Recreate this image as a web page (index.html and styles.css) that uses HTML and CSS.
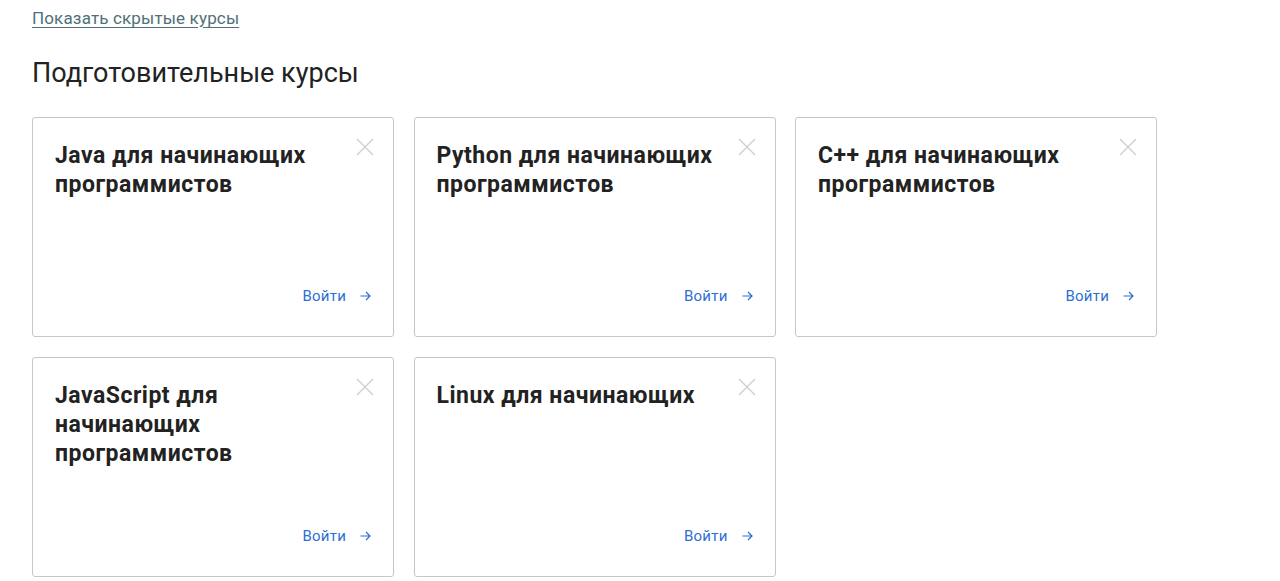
FILE: index.html
```html
<!DOCTYPE html>
<html lang="ru">

<head>
    <meta charset="UTF-8">
    <meta name="viewport" content="width=device-width, initial-scale=1.0">
    <title>Подготовительные курсы</title>
    <link rel="stylesheet" href="styles.css">
</head>

<body>
    <div class="page">
        <a class="show-hidden" href="#">Показать скрытые курсы</a>
        <h2 class="section-title">Подготовительные курсы</h2>

        <div class="course-grid">
            <div class="course-card">
                <div class="card-head">
                    <h3>Java для начинающих программистов</h3>
                    <button class="hide-btn" title="Скрыть">
                        <svg width="18" height="18" viewBox="0 0 18 18"><path d="M1 1L17 17M17 1L1 17" stroke="#cfcfcf" stroke-width="1.4" fill="none"/></svg>
                    </button>
                </div>
                <a class="enter" href="#">Войти <span class="arrow">
                    <svg width="11" height="10" viewBox="0 0 11 10"><path d="M0.5 5H10M6 1L10 5L6 9" stroke="#2d6fd2" stroke-width="1.2" fill="none"/></svg>
                </span></a>
            </div>
            <div class="course-card">
                <div class="card-head">
                    <h3>Python для начинающих программистов</h3>
                    <button class="hide-btn" title="Скрыть">
                        <svg width="18" height="18" viewBox="0 0 18 18"><path d="M1 1L17 17M17 1L1 17" stroke="#cfcfcf" stroke-width="1.4" fill="none"/></svg>
                    </button>
                </div>
                <a class="enter" href="#">Войти <span class="arrow">
                    <svg width="11" height="10" viewBox="0 0 11 10"><path d="M0.5 5H10M6 1L10 5L6 9" stroke="#2d6fd2" stroke-width="1.2" fill="none"/></svg>
                </span></a>
            </div>
            <div class="course-card">
                <div class="card-head">
                    <h3>C++ для начинающих программистов</h3>
                    <button class="hide-btn" title="Скрыть">
                        <svg width="18" height="18" viewBox="0 0 18 18"><path d="M1 1L17 17M17 1L1 17" stroke="#cfcfcf" stroke-width="1.4" fill="none"/></svg>
                    </button>
                </div>
                <a class="enter" href="#">Войти <span class="arrow">
                    <svg width="11" height="10" viewBox="0 0 11 10"><path d="M0.5 5H10M6 1L10 5L6 9" stroke="#2d6fd2" stroke-width="1.2" fill="none"/></svg>
                </span></a>
            </div>
            <div class="course-card">
                <div class="card-head">
                    <h3>JavaScript для начинающих программистов</h3>
                    <button class="hide-btn" title="Скрыть">
                        <svg width="18" height="18" viewBox="0 0 18 18"><path d="M1 1L17 17M17 1L1 17" stroke="#cfcfcf" stroke-width="1.4" fill="none"/></svg>
                    </button>
                </div>
                <a class="enter" href="#">Войти <span class="arrow">
                    <svg width="11" height="10" viewBox="0 0 11 10"><path d="M0.5 5H10M6 1L10 5L6 9" stroke="#2d6fd2" stroke-width="1.2" fill="none"/></svg>
                </span></a>
            </div>
            <div class="course-card">
                <div class="card-head">
                    <h3>Linux для начинающих</h3>
                    <button class="hide-btn" title="Скрыть">
                        <svg width="18" height="18" viewBox="0 0 18 18"><path d="M1 1L17 17M17 1L1 17" stroke="#cfcfcf" stroke-width="1.4" fill="none"/></svg>
                    </button>
                </div>
                <a class="enter" href="#">Войти <span class="arrow">
                    <svg width="11" height="10" viewBox="0 0 11 10"><path d="M0.5 5H10M6 1L10 5L6 9" stroke="#2d6fd2" stroke-width="1.2" fill="none"/></svg>
                </span></a>
            </div>
        </div>
    </div>
</body>

</html>
```

FILE: styles.css
```css
body {
    font-family: Roboto, 'Liberation Sans', sans-serif;
    background-color: #fff;
    color: #222;
    margin: 0;
}

.page {
    padding: 8px 32px 0;
}

.show-hidden {
    display: inline-block;
    font-size: 17px;
    letter-spacing: 0.15px;
    line-height: 20px;
    color: #50707a;
    text-decoration: underline;
    text-underline-offset: 3px;
}

.section-title {
    font-size: 27px;
    font-weight: 400;
    line-height: 32px;
    margin: 29px 0 28px;
    color: #222;
}

.course-grid {
    display: grid;
    grid-template-columns: repeat(3, 362px);
    grid-auto-rows: 220px;
    gap: 20px 19.5px;
}

.course-card {
    border: 1px solid #c6c6c6;
    border-radius: 3px;
    display: flex;
    flex-direction: column;
    justify-content: space-between;
    padding: 20px 22px 30px 22px;
    box-sizing: border-box;
}

.card-head {
    display: flex;
    justify-content: space-between;
    align-items: flex-start;
}

.card-head h3 {
    font-size: 23px;
    font-weight: 700;
    letter-spacing: 0.5px;
    line-height: 29px;
    margin: 0;
    padding-top: 3px;
    max-width: 280px;
    color: #222;
}

.hide-btn {
    background: none;
    border: none;
    padding: 0;
    margin: 0 -3px 0 0;
    cursor: pointer;
    line-height: 0;
}

.enter {
    align-self: flex-end;
    display: flex;
    align-items: center;
    gap: 14px;
    font-size: 15px;
    letter-spacing: 0.2px;
    line-height: 20px;
    color: #2d6fd2;
    text-decoration: none;
}

.arrow {
    line-height: 0;
}
```
